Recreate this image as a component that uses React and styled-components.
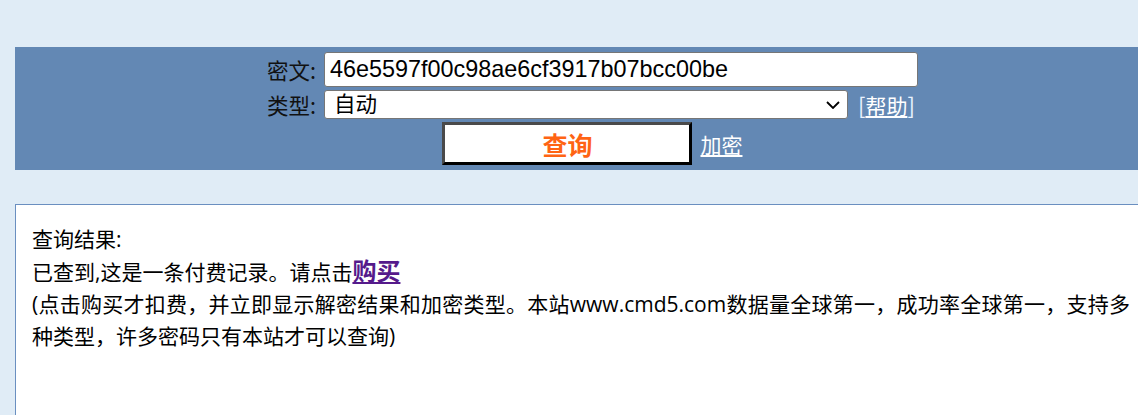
import React from "react";
import styled, { createGlobalStyle } from "styled-components";

const Global = createGlobalStyle`
  html, body { margin: 0; padding: 0; overflow: hidden; background: #e0ecf6; }
  body { font-family: "Noto Sans CJK SC", "Noto Sans", sans-serif; color: #000; }
`;

const Page = styled.div`
  width: 1151px;
  padding: 47px 15px 0 15px;
`;

const QueryPanel = styled.form`
  background: #6388b4;
  padding: 5px 0 5px 4px;
  display: flex;
  justify-content: center;
  margin: 0;
`;

const FormGrid = styled.div`
  display: grid;
  grid-template-columns: auto auto;
  column-gap: 8px;
  row-gap: 3px;
  align-items: center;
`;

const Label = styled.label`
  font-size: 21.5px;
  line-height: 26px;
  color: #111;
  text-align: right;
`;

const TextInput = styled.input`
  box-sizing: border-box;
  width: 594px;
  height: 35px;
  border: 1px solid #767676;
  border-radius: 3px;
  background: #fff;
  padding: 0 5px;
  font-family: "Liberation Sans", Arial, sans-serif;
  font-size: 23.4px;
  color: #000;
  outline: none;
`;

const TypeCell = styled.div`
  display: flex;
  align-items: center;
  gap: 10px;
  height: 29px;
`;

const SelectWrap = styled.div`
  position: relative;
  width: 524px;
  height: 29px;
`;

const Select = styled.select`
  appearance: none;
  box-sizing: border-box;
  width: 100%;
  height: 100%;
  border: 1px solid #767676;
  border-radius: 3px;
  background: #fff;
  padding: 0 0 4px 9px;
  font-family: "Noto Sans CJK SC", sans-serif;
  font-size: 21.5px;
  line-height: 24px;
  color: #000;
  outline: none;
`;

const Chevron = styled.svg`
  position: absolute;
  right: 8px;
  top: 11px;
  pointer-events: none;
`;

const PanelLink = styled.a`
  color: #fff;
  font-size: 21px;
  line-height: 26px;
  text-decoration: underline;
  text-underline-offset: 2px;
`;

const Help = styled.span`
  color: #e8f2ff;
  font-size: 22px;
  line-height: 26px;
`;

const ActionRow = styled.div`
  grid-column: 1 / span 2;
  display: flex;
  justify-content: center;
  align-items: center;
  gap: 8px;
  height: 43px;
`;

const SubmitButton = styled.button`
  box-sizing: border-box;
  width: 250px;
  height: 43px;
  background: #fff;
  border-style: solid;
  border-width: 3px;
  border-color: #4a4a4a #000 #000 #4a4a4a;
  font-family: "Noto Sans CJK SC", sans-serif;
  font-weight: 700;
  font-size: 25px;
  line-height: 30px;
  color: #ff6414;
  padding: 0;
  cursor: pointer;
`;

const ResultBox = styled.div`
  margin-top: 34px;
  min-height: 320px;
  background: #fff;
  border: 1px solid #6a8fc0;
  padding: 18px 35px 0 16px;
  font-family: "Open Sans", "Noto Sans CJK SC", sans-serif;
  font-size: 21px;
  line-height: 32px;
`;

const Line = styled.div``;

const BuyLink = styled.a`
  color: #551a8b;
  font-weight: 700;
  font-size: 24px;
  line-height: 32px;
  text-decoration: underline;
`;

const Note = styled.div`
  text-align: justify;
`;

const NoWrap = styled.span`
  white-space: nowrap;
`;

export default function App() {
  return (
    <>
      <Global />
      <Page>
        <QueryPanel onSubmit={(e) => e.preventDefault()}>
          <FormGrid>
            <Label htmlFor="q">密文:</Label>
            <TextInput id="q" defaultValue="46e5597f00c98ae6cf3917b07bcc00be" />
            <Label htmlFor="t">类型:</Label>
            <TypeCell>
              <SelectWrap>
                <Select id="t" defaultValue="auto">
                  <option value="auto">自动</option>
                  <option value="md5">md5</option>
                </Select>
                <Chevron width="14" height="8" viewBox="0 0 14 8">
                  <polyline points="1,1 7,7 13,1" fill="none" stroke="#000" strokeWidth="1.8" />
                </Chevron>
              </SelectWrap>
              <Help>
                [<PanelLink href="#">帮助</PanelLink>]
              </Help>
            </TypeCell>
            <ActionRow>
              <SubmitButton type="submit">查询</SubmitButton>
              <PanelLink href="#">加密</PanelLink>
            </ActionRow>
          </FormGrid>
        </QueryPanel>
        <ResultBox>
          <Line>查询结果:</Line>
          <Line>
            已查到,这是一条付费记录。请点击<BuyLink href="#">购买</BuyLink>
          </Line>
          <Note>
            (点击购买才扣费，并立即显示解密结果和加密类型。本站www.cmd5.com数据量全球第一，成功率全球第一，支持多
            <NoWrap>种类型，许多密码只有本站才可以查询)</NoWrap>
          </Note>
        </ResultBox>
      </Page>
    </>
  );
}
